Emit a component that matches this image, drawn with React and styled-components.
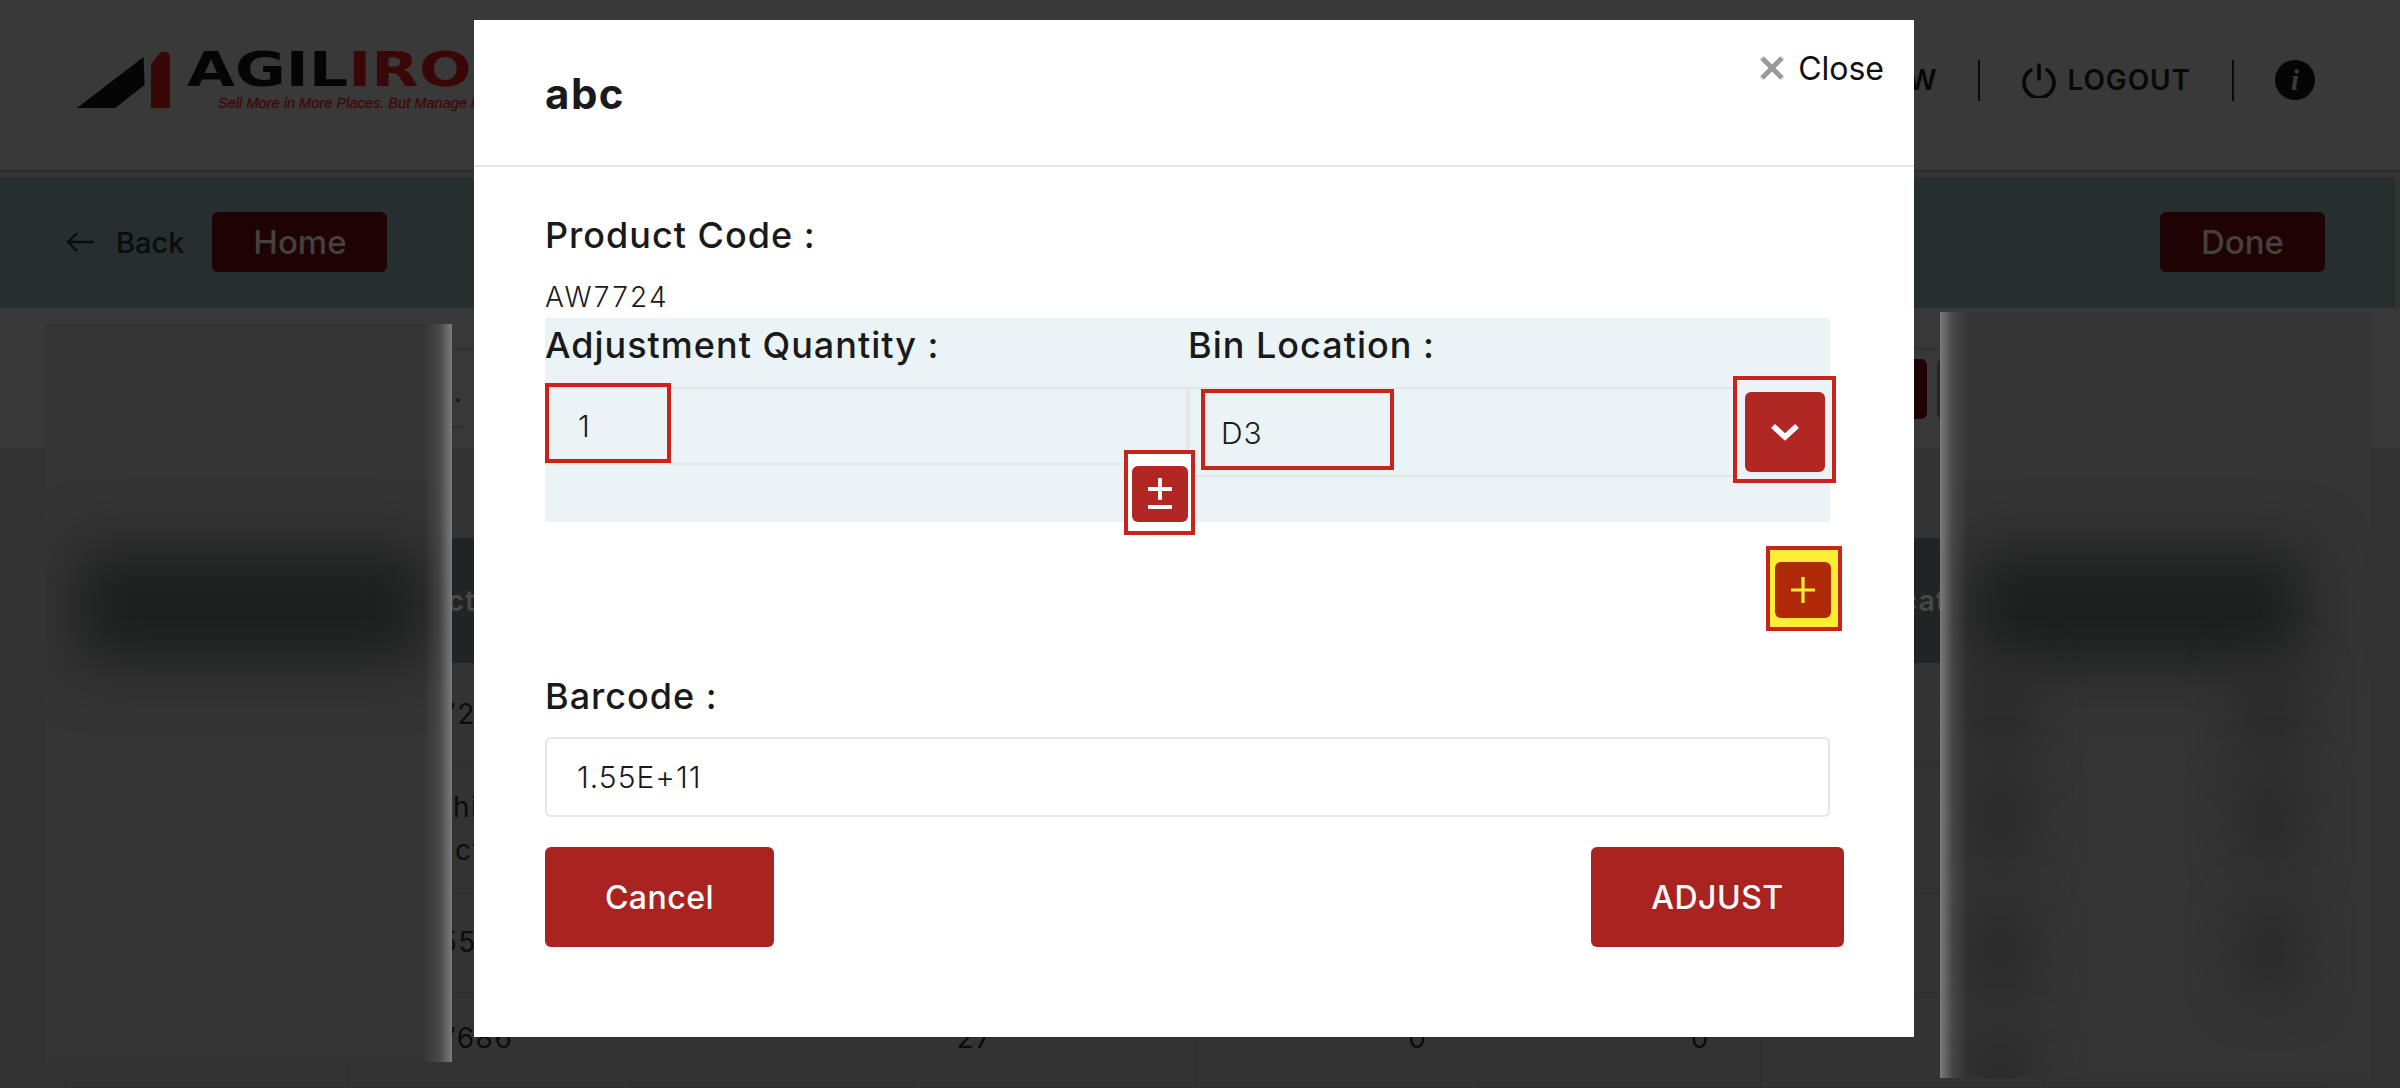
import React from "react"
import styled, { createGlobalStyle } from "styled-components"

const FONT = `Inter, "Open Sans", "Liberation Sans", sans-serif`

const rows = [
  { code: "AW7245", height: 103 },
  { code: "Machine\nSelect", height: 127 },
  { code: "AW5538", height: 100 },
  { code: "AW7686", qty: "27", a: "0", b: "0", height: 95, last: true },
]

const rightBlobs = [
  { x: 30, y: 355 },
  { x: 30, y: 462 },
  { x: 30, y: 593 },
  { x: 30, y: 725 },
  { x: 300, y: 355 },
  { x: 300, y: 462 },
  { x: 300, y: 593 },
]

const App = () => (
  <>
    <GlobalStyle />
    <Page>
      <TopBar>
        <Logo>
          <LogoMark viewBox="0 0 94 57">
            <path d="M0 56 L66.5 5 L67.6 33 L38 56 Z" fill="#050505" />
            <path d="M74 56 V12 L84 0 H88 Q93 0 93 6 V56 Z" fill="#3a0707" />
          </LogoMark>
          <LogoText>
            <LogoName>
              AGIL<LogoAccent>IRON</LogoAccent>
            </LogoName>
            <Tagline>Sell More in More Places. But Manage it All in One.</Tagline>
          </LogoText>
        </Logo>
        <TopNav>
          <NavLink>VIEW</NavLink>
          <NavDivider />
          <NavLink>
            <svg width="36" height="36" viewBox="0 0 36 36" fill="none" stroke="#070707" strokeWidth="3.6" strokeLinecap="round">
              <path d="M18 3v14" />
              <path d="M10 8a15 15 0 1 0 16 0" />
            </svg>
            LOGOUT
          </NavLink>
          <NavDivider />
          <InfoDot>i</InfoDot>
        </TopNav>
      </TopBar>

      <ActionBand>
        <BackLink>
          <svg width="28" height="22" viewBox="0 0 28 22" fill="none" stroke="#0a0d0e" strokeWidth="2.4">
            <path d="M28 11H2M11 2l-9 9 9 9" />
          </svg>
          Back
        </BackLink>
        <BandButton $wide>Home</BandButton>
        <BandSpacer />
        <BandButton>Done</BandButton>
      </ActionBand>

      <ToolSection>
        <ToolRow>
          <SearchBox>Search...</SearchBox>
          <ToolButton $bg="#1f0303" />
          <ToolButton $bg="#232323" />
        </ToolRow>
      </ToolSection>

      <TableArea>
        <TableHead>
          <HeadCell />
          <HeadCell>Product</HeadCell>
          <HeadCell />
          <HeadCell />
          <HeadCell />
          <HeadCell />
          <HeadCell $shift>Allocated</HeadCell>
          <HeadCell />
        </TableHead>
        {rows.map((row) => (
          <TableRow key={row.code} $height={row.height}>
            <Cell />
            <Cell $last={row.last}>{row.code}</Cell>
            <Cell />
            <Cell $last={row.last}>{row.qty}</Cell>
            <Cell $right $last={row.last}>{row.a}</Cell>
            <Cell $right $last={row.last}>{row.b}</Cell>
            <Cell />
            <Cell />
          </TableRow>
        ))}
      </TableArea>

      <LeftPanel>
        <PanelBand $left="30px" $width="350px" $top="225px" />
        <PanelEdge $side="right" />
      </LeftPanel>

      <RightPanel>
        <PanelBand $left="32px" $width="333px" $top="237px" />
        {rightBlobs.map((b) => (
          <PanelBlob key={`${b.x}-${b.y}`} style={{ left: b.x, top: b.y }} />
        ))}
        <PanelEdge $side="left" />
      </RightPanel>

      <Modal>
        <ModalHeader>
          <ModalTitle>abc</ModalTitle>
          <CloseLink>
            <svg width="24" height="24" viewBox="0 0 24 24" fill="none" stroke="#9a9a9a" strokeWidth="5">
              <path d="M2 2l20 20M22 2L2 22" />
            </svg>
            Close
          </CloseLink>
        </ModalHeader>

        <ModalBody>
          <FieldLabel>Product Code :</FieldLabel>
          <CodeValue>AW7724</CodeValue>

          <AdjustPanel>
            <AdjustColumn>
              <FieldLabel>Adjustment Quantity :</FieldLabel>
              <QuantityField>
                <MarkedValue $width="126px" $height="80px" $top="-6px" $left="-2px" $pad="29px">1</MarkedValue>
              </QuantityField>
            </AdjustColumn>
            <AdjustColumn>
              <FieldLabel>Bin Location :</FieldLabel>
              <BinField>
                <MarkedValue $width="193px" $height="81px" $top="0" $left="11px" $pad="16px">D3</MarkedValue>
                <ChevronFrame>
                  <SquareButton $width="80px" $height="80px">
                    <svg width="32" height="20" viewBox="0 0 32 20" fill="none" stroke="#fff" strokeWidth="5.6">
                      <path d="M4 4l12 11L28 4" />
                    </svg>
                  </SquareButton>
                </ChevronFrame>
              </BinField>
            </AdjustColumn>
            <ToggleFrame>
              <SquareButton $width="56px" $height="56px">
                <svg width="28" height="40" viewBox="0 0 28 40" fill="none" stroke="#fff" strokeWidth="3.8">
                  <path d="M2 15h24M14 4v22M2 33h24" />
                </svg>
              </SquareButton>
            </ToggleFrame>
          </AdjustPanel>

          <AddRow>
            <AddFrame>
              <SquareButton $width="56px" $height="56px" $bg="#b02a08">
                <svg width="24" height="26" viewBox="0 0 24 26" fill="none" stroke="#ffee33" strokeWidth="3.2">
                  <path d="M0 13h24M12 0v26" />
                </svg>
              </SquareButton>
            </AddFrame>
          </AddRow>

          <BarcodeLabel>Barcode :</BarcodeLabel>
          <BarcodeInput>1.55E+11</BarcodeInput>

          <ModalActions>
            <ActionButton $width="229px">Cancel</ActionButton>
            <ActionButton $width="253px">ADJUST</ActionButton>
          </ModalActions>
        </ModalBody>
      </Modal>
    </Page>
  </>
)

export default App

const GlobalStyle = createGlobalStyle`
  html, body {
    margin: 0;
    height: 100%;
    overflow: hidden;
    background: #333;
  }
  * { box-sizing: border-box; }
`

const Page = styled.div`
  position: relative;
  width: 2400px;
  height: 1088px;
  overflow: hidden;
  font-family: ${FONT};
  color: #080808;
`

const TopBar = styled.header`
  height: 172px;
  padding: 52px 85px 0 77px;
  background: #393939;
  border-bottom: 2px solid #2b2b2b;
  display: flex;
  justify-content: space-between;
`

const Logo = styled.div`
  display: flex;
  gap: 16px;
  height: 57px;
`

const LogoMark = styled.svg`
  width: 94px;
  height: 57px;
`

const LogoText = styled.div`
  width: 290px;
  white-space: nowrap;
`

const LogoName = styled.div`
  margin-top: -2px;
  font: 700 48px/38px "DejaVu Sans", sans-serif;
  color: #050505;
  transform: scaleX(1.29);
  transform-origin: left center;
`

const LogoAccent = styled.span`
  color: #3a0707;
`

const Tagline = styled.div`
  margin: 7px 0 0 31px;
  font: italic 400 14.6px/16px "Liberation Sans", sans-serif;
  -webkit-text-stroke: 0.3px #3f0808;
  color: #3f0808;
`

const TopNav = styled.nav`
  display: flex;
  align-items: center;
  height: 48px;
  margin-top: 4px;
`

const NavLink = styled.div`
  display: flex;
  align-items: center;
  gap: 10px;
  font-size: 28px;
  font-weight: 600;
  letter-spacing: 0.9px;
`

const NavDivider = styled.span`
  width: 2px;
  height: 41px;
  margin: 0 41px;
  background: #0a0a0a;
`

const InfoDot = styled.div`
  width: 40px;
  height: 40px;
  border-radius: 50%;
  background: #050505;
  color: #3a3a3a;
  display: flex;
  align-items: center;
  justify-content: center;
  font: italic 700 30px/1 "Liberation Serif", serif;
`

const ActionBand = styled.section`
  height: 130px;
  margin: 6px 5px 0 0;
  padding: 34px 70px 0 66px;
  background: #262e30;
  display: flex;
  align-items: flex-start;
`

const BackLink = styled.div`
  display: flex;
  align-items: center;
  gap: 22px;
  height: 60px;
  margin-right: 28px;
  font-size: 29px;
  font-weight: 500;
  color: #0a0d0e;
`

const BandSpacer = styled.div`
  flex: 1;
`

const BandButton = styled.div`
  width: ${(p) => (p.$wide ? "175px" : "165px")};
  height: 60px;
  border-radius: 6px;
  background: #1f0303;
  color: #454040;
  font-size: 33px;
  font-weight: 500;
  display: flex;
  align-items: center;
  justify-content: center;
`

const ToolSection = styled.section`
  height: 140px;
  margin-bottom: 90px;
  padding: 40px 75px 0 65px;
  background: #383838;
`

const ToolRow = styled.div`
  height: 100px;
  padding: 10px 348px 0 0;
  border-top: 1px solid #2c2c2c;
  display: flex;
  gap: 10px;
`

const SearchBox = styled.div`
  width: 397px;
  height: 79px;
  margin: -10px auto 0 0;
  padding-bottom: 17px;
  border-bottom: 2px solid #2c2c2c;
  display: flex;
  align-items: flex-end;
  justify-content: flex-end;
  font-size: 27px;
  color: #151515;
`

const ToolButton = styled.div`
  width: 40px;
  height: 60px;
  border-radius: 6px;
  background: ${(p) => p.$bg};
`

const TableArea = styled.section`
  margin: 0 75px 0 65px;
`

const TableHead = styled.div`
  height: 125px;
  background: #222324;
  display: grid;
  grid-template-columns: repeat(8, 282.5px);
`

const HeadCell = styled.div`
  padding-left: ${(p) => (p.$shift ? "85px" : "15px")};
  display: flex;
  align-items: center;
  font-size: 28px;
  font-weight: 600;
  letter-spacing: 1px;
  color: #474849;
  white-space: nowrap;
`

const TableRow = styled.div`
  height: ${(p) => p.$height}px;
  border-bottom: 1px solid #2c2c2c;
  display: grid;
  grid-template-columns: repeat(8, 282.5px);
`

const Cell = styled.div`
  padding: 0 ${(p) => (p.$right ? "50px" : "43px")} ${(p) => (p.$last ? "4px" : "0")};
  border-left: 1px solid #2c2c2c;
  display: flex;
  align-items: center;
  justify-content: ${(p) => (p.$right ? "flex-end" : "flex-start")};
  font-size: 28px;
  letter-spacing: 1.5px;
  line-height: 43px;
  white-space: pre-line;
  color: #0c0c0c;
`

const LeftPanel = styled.aside`
  position: absolute;
  left: 46px;
  top: 324px;
  width: 406px;
  height: 738px;
  overflow: hidden;
  background: #353535;
`

const RightPanel = styled.aside`
  position: absolute;
  left: 1940px;
  top: 312px;
  width: 430px;
  height: 766px;
  overflow: hidden;
  background: #353535;
`

const PanelBand = styled.div`
  position: absolute;
  left: ${(p) => p.$left};
  top: ${(p) => p.$top};
  width: ${(p) => p.$width};
  height: 115px;
  background: #1d1e1e;
  filter: blur(30px);
`

const PanelBlob = styled.div`
  position: absolute;
  width: 60px;
  height: 90px;
  background: #292929;
  filter: blur(24px);
`

const PanelEdge = styled.div`
  position: absolute;
  top: 0;
  bottom: 0;
  ${(p) => p.$side}: 0;
  width: 28px;
  background: linear-gradient(to ${(p) => p.$side}, rgba(150, 150, 150, 0), rgba(150, 150, 150, 0.2) 55%, rgba(150, 150, 150, 0.72));
`

const Modal = styled.div`
  position: absolute;
  left: 474px;
  top: 20px;
  width: 1440px;
  height: 1017px;
  background: #fff;
  color: #1a1a1a;
`

const ModalHeader = styled.div`
  height: 147px;
  border-bottom: 2px solid #e5e5e5;
  padding: 0 30px 0 71px;
  display: flex;
  justify-content: space-between;
`

const ModalTitle = styled.h1`
  margin: 49px 0 0;
  font-size: 42px;
  line-height: 50px;
  font-weight: 700;
  letter-spacing: 1.5px;
`

const CloseLink = styled.div`
  display: flex;
  align-items: center;
  gap: 14px;
  height: 48px;
  margin-top: 24px;
  font-size: 32px;
  font-weight: 400;
  color: #111;
`

const ModalBody = styled.div`
  padding: 48px 70px 0 71px;
`

const FieldLabel = styled.div`
  font-size: 36px;
  line-height: 41px;
  font-weight: 450;
  letter-spacing: 1px;
  white-space: nowrap;
`

const CodeValue = styled.div`
  margin-top: 24px;
  font-size: 28px;
  line-height: 34px;
  font-weight: 300;
  letter-spacing: 2.2px;
`

const AdjustPanel = styled.div`
  position: relative;
  width: 1285px;
  height: 204px;
  margin-top: 4px;
  padding-top: 7px;
  background: #eaf3f6;
  display: grid;
  grid-template-columns: 643px 642px;
`

const AdjustColumn = styled.div`
  min-width: 0;
`

const QuantityField = styled.div`
  height: 78px;
  margin-top: 21px;
  border: 2px solid #e3e7e9;
  border-radius: 4px 4px 0 0;
`

const BinField = styled.div`
  position: relative;
  height: 90px;
  margin-top: 21px;
  border-top: 2px solid #e3e7e9;
  border-bottom: 2px solid #e3e7e9;
  border-left: 2px solid #e3e7e9;
  display: flex;
  justify-content: space-between;
`

const MarkedValue = styled.div`
  width: ${(p) => p.$width};
  height: ${(p) => p.$height};
  margin: ${(p) => p.$top} 0 0 ${(p) => p.$left};
  padding: 6px 0 0 ${(p) => p.$pad};
  border: 4px solid #c9241b;
  display: flex;
  align-items: center;
  font-size: 30px;
  font-weight: 300;
  letter-spacing: 1px;
`

const ChevronFrame = styled.div`
  position: absolute;
  right: -6px;
  top: -13px;
  padding: 12px 7px 7px 8px;
  border: 4px solid #c9241b;
  background: #eaf3f6;
`

const SquareButton = styled.div`
  width: ${(p) => p.$width};
  height: ${(p) => p.$height};
  border-radius: 6px;
  background: ${(p) => p.$bg || "#b02724"};
  display: flex;
  align-items: center;
  justify-content: center;
`

const ToggleFrame = styled.div`
  position: absolute;
  left: 579px;
  top: 132px;
  padding: 12px 3px 9px 4px;
  border: 4px solid #c9241b;
  background: #fff;
`

const AddRow = styled.div`
  display: flex;
  justify-content: flex-end;
  height: 85px;
  margin-top: 24px;
  margin-right: 2px;
`

const AddFrame = styled.div`
  padding: 12px 7px 9px 5px;
  border: 4px solid #c9241b;
  background: #ffee33;
`

const BarcodeLabel = styled(FieldLabel)`
  margin-top: 45px;
`

const BarcodeInput = styled.div`
  width: 1285px;
  height: 80px;
  margin-top: 20px;
  padding-left: 30px;
  border: 2px solid #e5e5e5;
  border-radius: 6px;
  display: flex;
  align-items: center;
  font-size: 30px;
  font-weight: 300;
  letter-spacing: 1px;
`

const ModalActions = styled.div`
  width: 1299px;
  margin-top: 30px;
  display: flex;
  justify-content: space-between;
`

const ActionButton = styled.div`
  width: ${(p) => p.$width};
  height: 100px;
  border-radius: 6px;
  background: #a92421;
  color: #fff;
  font-size: 32px;
  font-weight: 500;
  letter-spacing: 0.5px;
  display: flex;
  align-items: center;
  justify-content: center;
`
